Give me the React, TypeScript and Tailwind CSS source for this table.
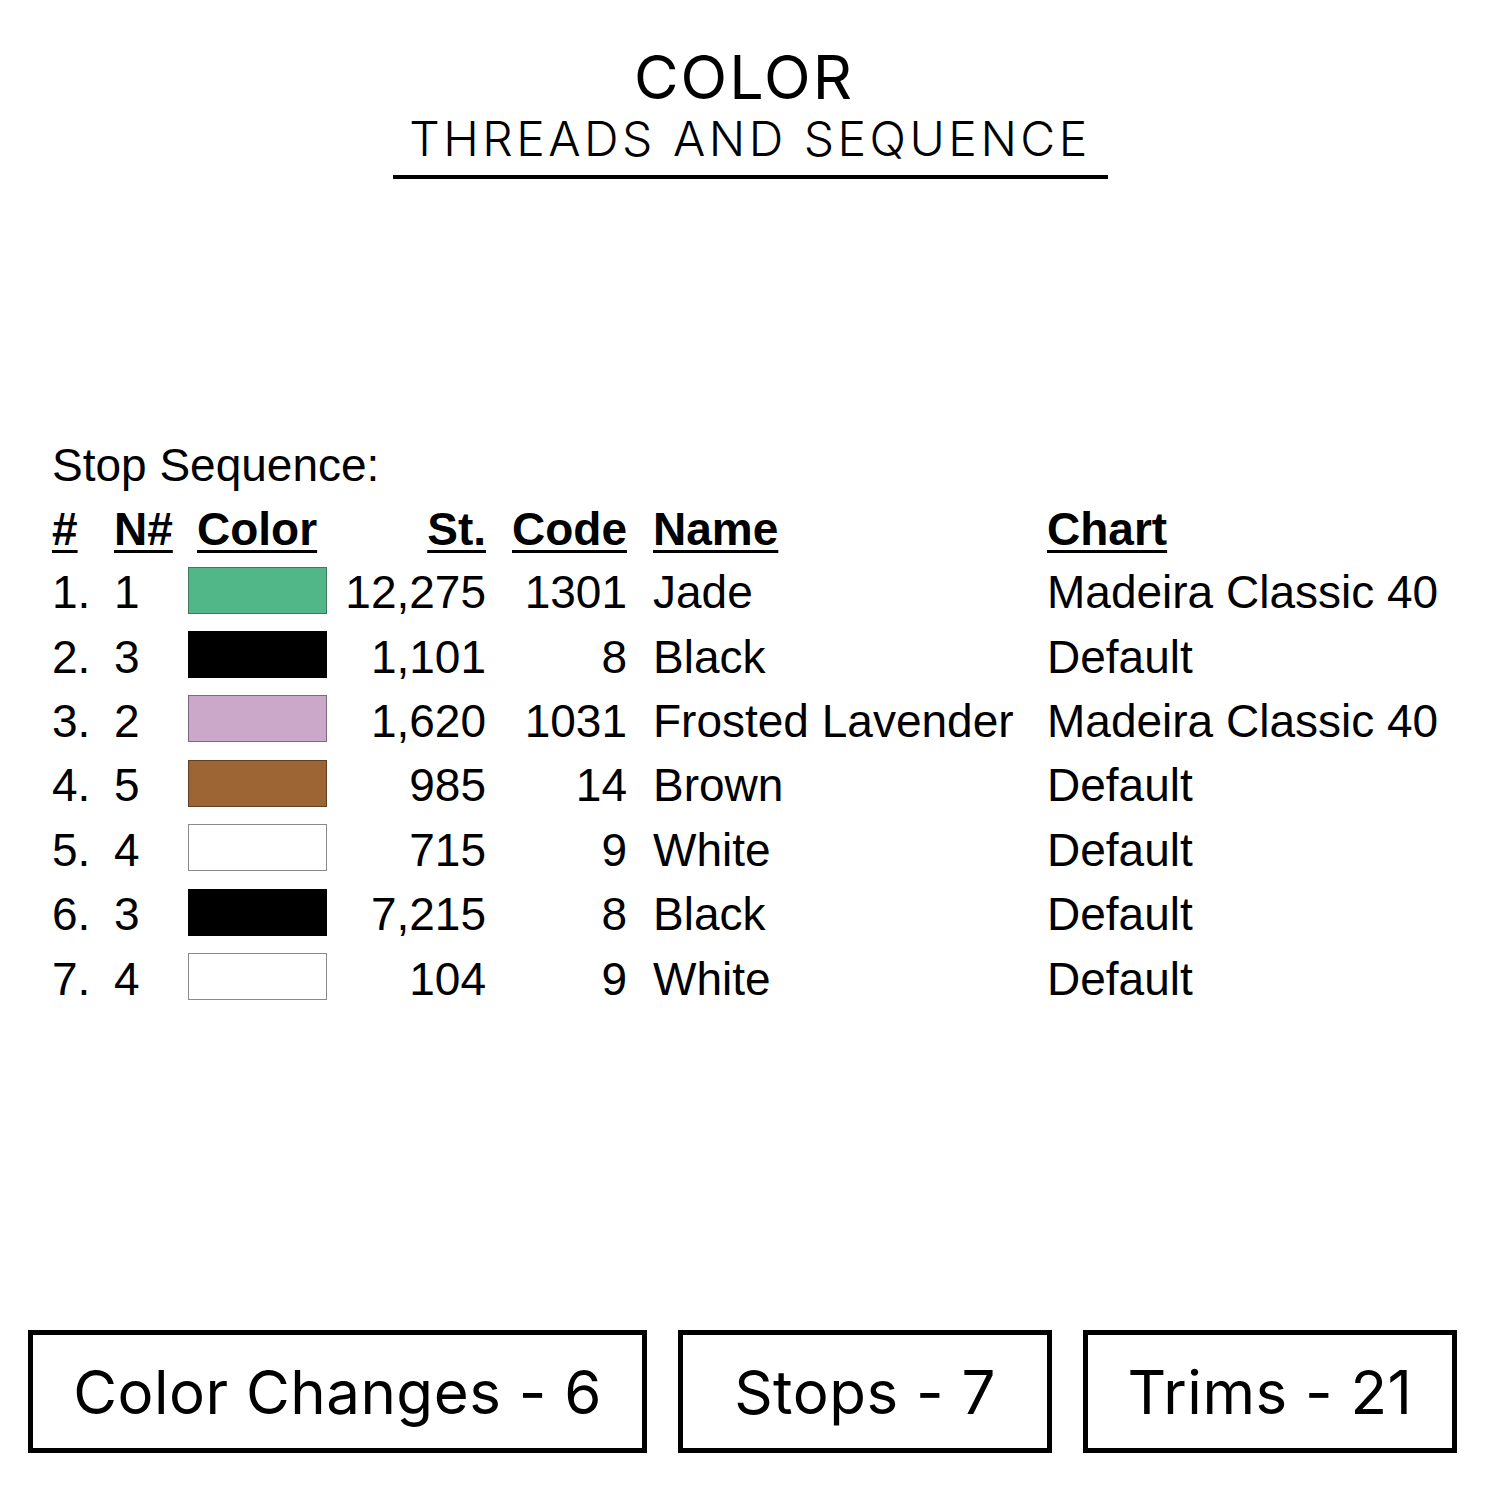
const rows = [
  { n: '1.', needle: '1', swatch: 'bg-[#52b788]', border: 'border-[#3f7a5c]', st: '12,275', code: '1301', name: 'Jade', chart: 'Madeira Classic 40' },
  { n: '2.', needle: '3', swatch: 'bg-black', border: 'border-black', st: '1,101', code: '8', name: 'Black', chart: 'Default' },
  { n: '3.', needle: '2', swatch: 'bg-[#cba7c9]', border: 'border-[#7c6a7b]', st: '1,620', code: '1031', name: 'Frosted Lavender', chart: 'Madeira Classic 40' },
  { n: '4.', needle: '5', swatch: 'bg-[#9c6533]', border: 'border-[#5e4027]', st: '985', code: '14', name: 'Brown', chart: 'Default' },
  { n: '5.', needle: '4', swatch: 'bg-white', border: 'border-[#8a8a8a]', st: '715', code: '9', name: 'White', chart: 'Default' },
  { n: '6.', needle: '3', swatch: 'bg-black', border: 'border-black', st: '7,215', code: '8', name: 'Black', chart: 'Default' },
  { n: '7.', needle: '4', swatch: 'bg-white', border: 'border-[#8a8a8a]', st: '104', code: '9', name: 'White', chart: 'Default' },
]

const cols = 'grid grid-cols-[62px_74px_139px_159px_141px_420px_1fr] items-center'

function StatBox({ label, className }: { label: string; className: string }) {
  return (
    <div className={`flex h-[123px] items-center justify-center border-[5px] border-black ${className}`}>
      <span className="font-['Inter',sans-serif] text-[60px] leading-none tracking-[0.5px] text-black">{label}</span>
    </div>
  )
}

export default function App() {
  return (
    <div className="flex min-h-[1500px] w-[1500px] flex-col bg-white text-black">
      {/* Title */}
      <header className="flex h-[432px] flex-col items-center pt-[47px]">
        <h1 className="pr-[12px] font-['Inter',sans-serif] text-[61px] font-normal leading-none tracking-[2px]">COLOR</h1>
        <div className="mt-[7px] w-[715px] border-b-4 border-black pb-[12px] text-center">
          <h2 className="font-['Inter',sans-serif] text-[48px] font-light leading-none tracking-[3.5px]">
            THREADS AND SEQUENCE
          </h2>
        </div>
      </header>

      {/* Stop sequence table */}
      <section className="pl-[52px] font-['Liberation_Sans',Arial,sans-serif] text-[46px] leading-none">
        <div className="flex h-[66px] items-center">Stop Sequence:</div>

        <div className={`${cols} h-[62px] font-bold`}>
          <span className="underline decoration-[3px] underline-offset-[5px]">#</span>
          <span className="underline decoration-[3px] underline-offset-[5px]">N#</span>
          <span className="pl-[9px] underline decoration-[3px] underline-offset-[5px]">Color</span>
          <span className="text-right underline decoration-[3px] underline-offset-[5px]">St.</span>
          <span className="text-right underline decoration-[3px] underline-offset-[5px]">Code</span>
          <span className="pl-[26px] underline decoration-[3px] underline-offset-[5px]">Name</span>
          <span className="underline decoration-[3px] underline-offset-[5px]">Chart</span>
        </div>

        {rows.map((r) => (
          <div key={r.n} className={`${cols} h-[64.4px]`}>
            <span>{r.n}</span>
            <span>{r.needle}</span>
            <span className={`-mt-[4px] h-[47px] w-[139px] border-[1.5px] ${r.swatch} ${r.border}`} />
            <span className="text-right">{r.st}</span>
            <span className="text-right">{r.code}</span>
            <span className="whitespace-nowrap pl-[26px]">{r.name}</span>
            <span className="whitespace-nowrap">{r.chart}</span>
          </div>
        ))}
      </section>

      {/* Totals */}
      <footer className="mt-auto flex gap-[31px] pb-[47px] pl-[28px]">
        <StatBox label="Color Changes - 6" className="w-[619px]" />
        <StatBox label="Stops - 7" className="w-[374px]" />
        <StatBox label="Trims - 21" className="w-[374px]" />
      </footer>
    </div>
  )
}
